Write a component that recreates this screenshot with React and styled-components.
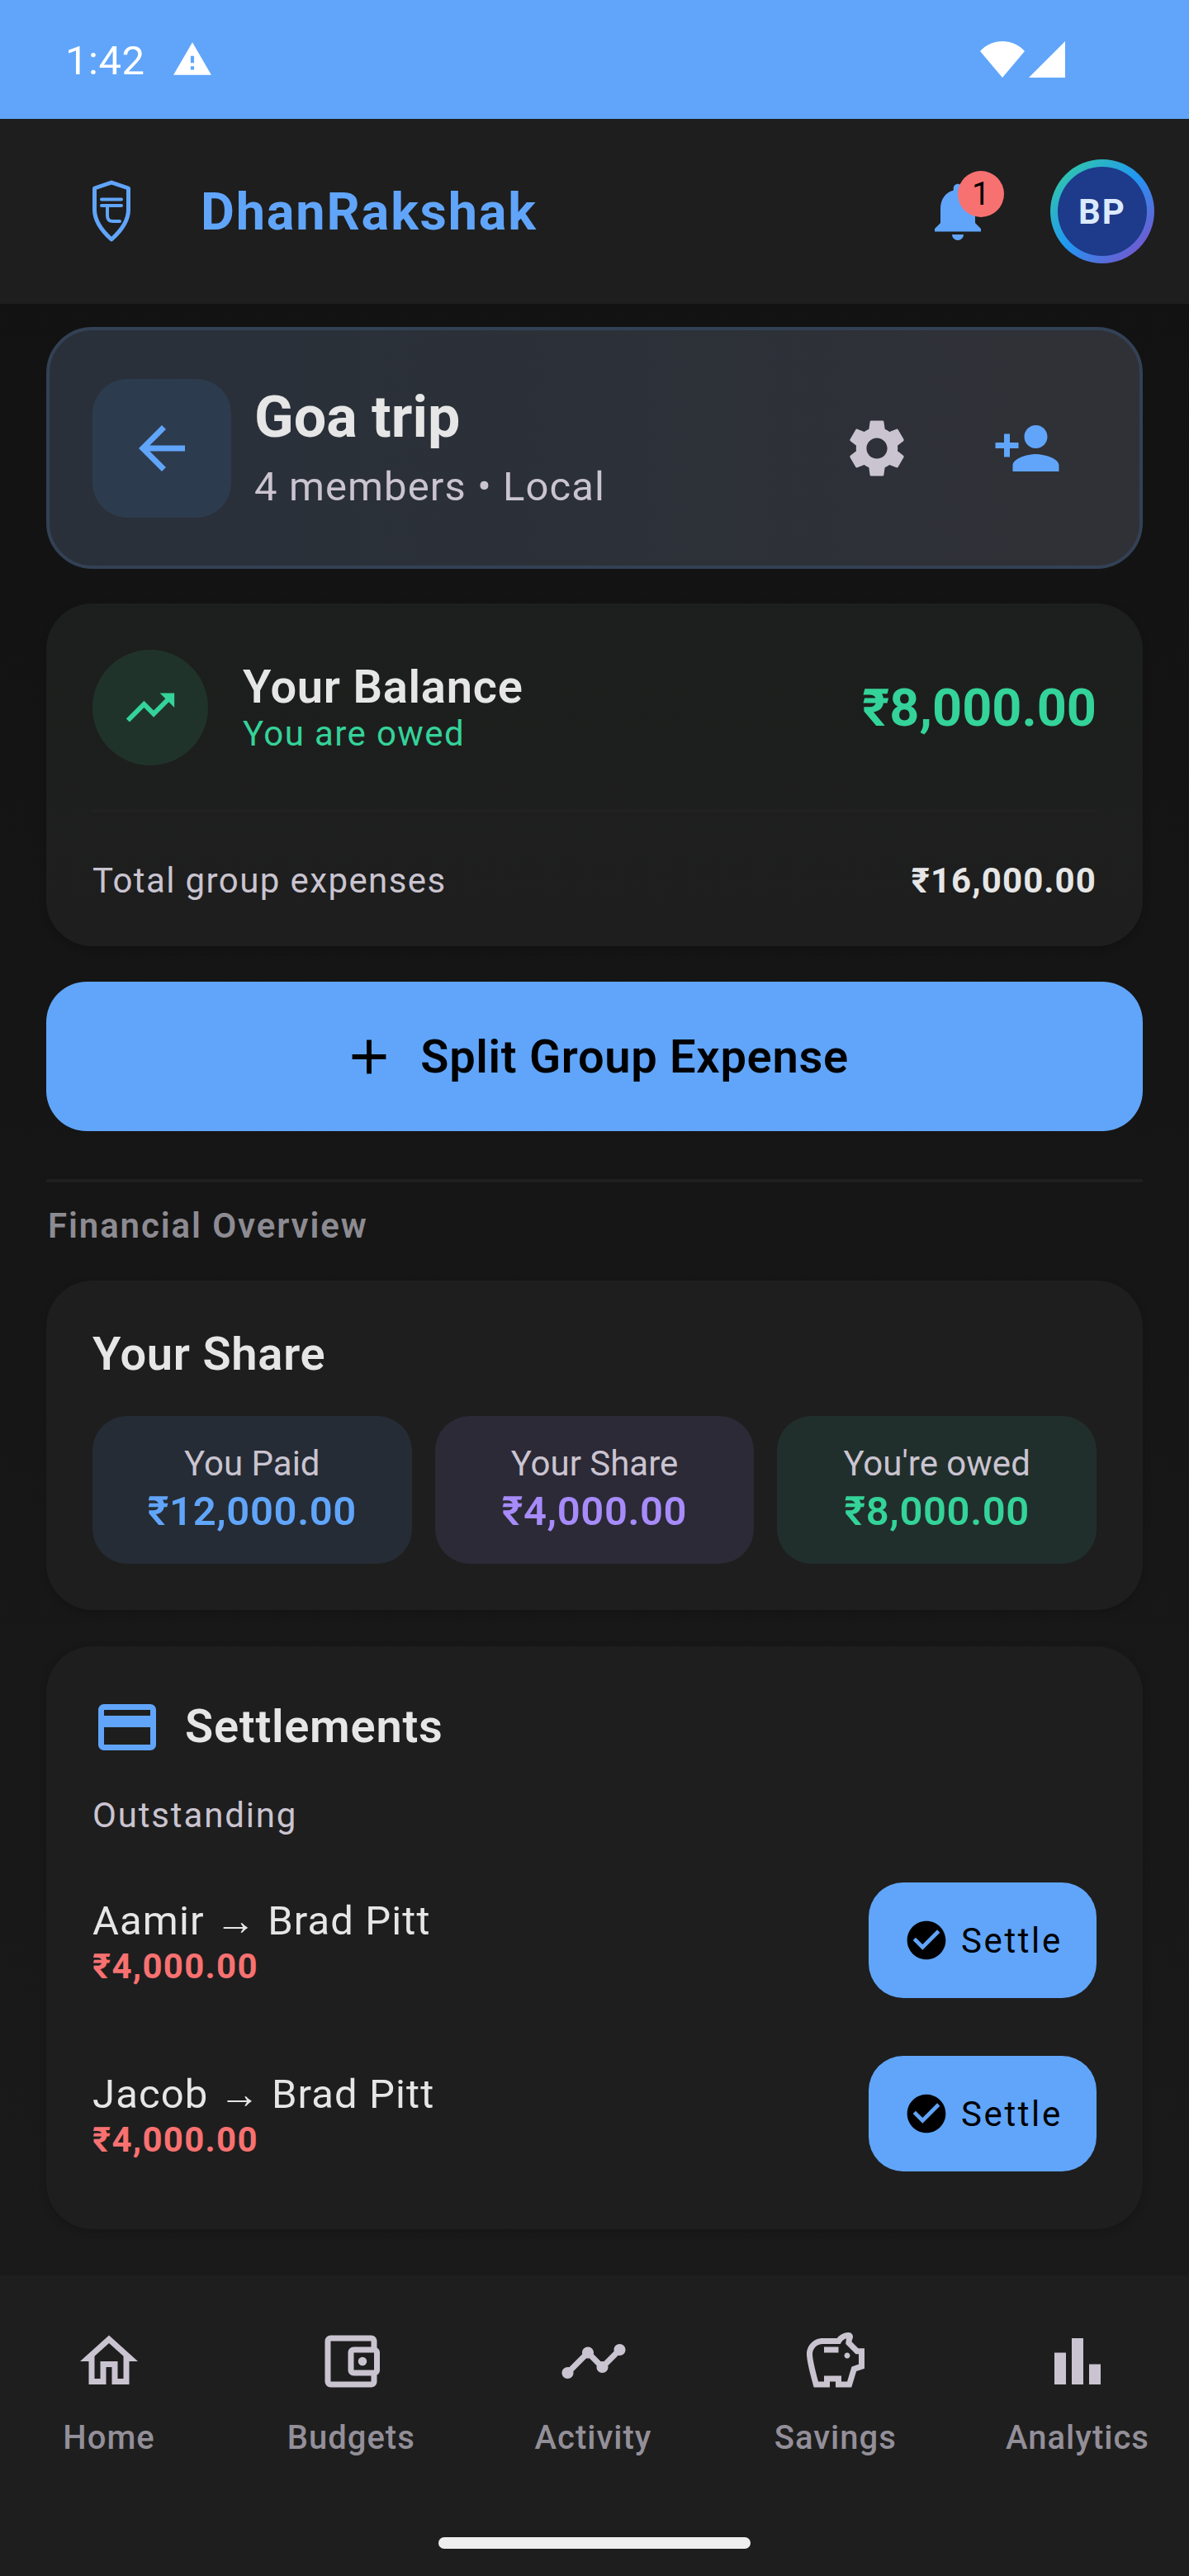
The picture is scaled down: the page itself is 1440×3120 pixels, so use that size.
import React from 'react';
import styled, { createGlobalStyle } from 'styled-components';
import {
  MdAdd,
  MdArrowBack,
  MdBarChart,
  MdCheckCircle,
  MdCreditCard,
  MdNotifications,
  MdOutlineAccountBalanceWallet,
  MdOutlineHome,
  MdOutlineSavings,
  MdPersonAdd,
  MdSettings,
  MdTimeline,
  MdTrendingUp,
  MdWarning,
} from 'react-icons/md';

const blue = '#60a5fa';
const green = '#34d399';
const red = '#f87171';
const purple = '#a78bfa';
const muted = '#cac4d0';
const light = '#e6e6e6';

const GlobalStyle = createGlobalStyle`
  html, body {
    margin: 0;
    padding: 0;
    background: #121212;
  }
  body {
    font-family: Roboto, "Noto Sans", sans-serif;
  }
  * {
    box-sizing: border-box;
  }
`;

const Page = styled.div`
  width: 1440px;
  height: 3120px;
  display: flex;
  flex-direction: column;
  overflow: hidden;
  background: linear-gradient(180deg, #111111 0%, #1b1b1b 100%);
`;

const StatusBar = styled.div`
  height: 144px;
  flex: none;
  display: flex;
  align-items: center;
  background: ${blue};
  color: #fff;
  padding: 0 150px 0 79px;
`;

const Clock = styled.span`
  font-size: 49px;
  font-weight: 400;
  letter-spacing: 0.5px;
  margin-top: 2px;
`;

const WarningIcon = styled(MdWarning)`
  margin-left: 33px;
`;

const StatusIcons = styled.div`
  margin-left: auto;
  display: flex;
  align-items: flex-end;
  gap: 5px;
`;

const Header = styled.header`
  height: 224px;
  flex: none;
  display: flex;
  align-items: center;
  background: #1e1e1e;
  padding: 0 42px 0 112px;
`;

const Brand = styled.div`
  font-size: 63px;
  font-weight: 700;
  letter-spacing: 1.8px;
  color: ${blue};
  margin-left: 85px;
`;

const Bell = styled.div`
  position: relative;
  width: 84px;
  height: 84px;
  margin-left: auto;
  color: ${blue};
  font-size: 84px;
  line-height: 0;
`;

const Badge = styled.span`
  position: absolute;
  left: 42px;
  top: -7px;
  width: 56px;
  height: 56px;
  border-radius: 50%;
  background: ${red};
  color: #000;
  font-size: 39px;
  line-height: 56px;
  text-align: center;
`;

const Avatar = styled.div`
  width: 126px;
  height: 126px;
  margin-left: 70px;
  padding: 9px;
  border-radius: 50%;
  background: linear-gradient(135deg, #34d399 0%, #2196f3 50%, #8b45c4 100%);
`;

const AvatarInner = styled.div`
  width: 100%;
  height: 100%;
  border-radius: 50%;
  background: #1e3a8a;
  color: #dbeafe;
  display: flex;
  align-items: center;
  justify-content: center;
  font-size: 42px;
  font-weight: 700;
  letter-spacing: 2px;
`;

const Content = styled.main`
  flex: 1;
  padding: 28px 56px 0;
  display: flex;
  flex-direction: column;
`;

const GroupCard = styled.section`
  height: 293px;
  flex: none;
  display: flex;
  align-items: center;
  padding: 0 52px;
  border: 4px solid #334155;
  border-radius: 56px;
  background: linear-gradient(90deg, #29303a 0%, #2f3136 100%);
`;

const BackButton = styled.div`
  width: 168px;
  height: 168px;
  border-radius: 42px;
  background: #2d3b4e;
  color: ${blue};
  font-size: 84px;
  display: flex;
  align-items: center;
  justify-content: center;
`;

const GroupText = styled.div`
  margin-left: 28px;
  flex: 1;
`;

const GroupTitle = styled.div`
  font-size: 70px;
  line-height: 84px;
  font-weight: 700;
  color: ${light};
`;

const GroupMeta = styled.div`
  margin-top: 10px;
  font-size: 49px;
  line-height: 66px;
  letter-spacing: 1.1px;
  color: ${muted};
`;

const IconButton = styled.div`
  width: 168px;
  height: 168px;
  margin-left: 14px;
  font-size: 84px;
  color: ${(p) => p.$color};
  display: flex;
  align-items: center;
  justify-content: center;
`;

const Card = styled.section`
  flex: none;
  margin-top: ${(p) => p.$top}px;
  padding: 56px;
  border-radius: 56px;
  background: #1e1e1e;
  box-shadow: 0 3px 10px rgba(0, 0, 0, 0.18);
`;

const BalanceCard = styled(Card)`
  background: linear-gradient(180deg, #1c1f1d 0%, #1e1e1e 100%);
`;

const BalanceRow = styled.div`
  height: 140px;
  display: flex;
  align-items: center;
`;

const TrendCircle = styled.div`
  width: 140px;
  height: 140px;
  border-radius: 50%;
  background: #20332b;
  color: ${green};
  font-size: 70px;
  display: flex;
  align-items: center;
  justify-content: center;
`;

const BalanceText = styled.div`
  margin-left: 42px;
  flex: 1;
`;

const BalanceTitle = styled.div`
  font-size: 56px;
  line-height: 64px;
  font-weight: 600;
  letter-spacing: 0.75px;
  color: ${light};
`;

const BalanceSub = styled.div`
  font-size: 42px;
  line-height: 50px;
  letter-spacing: 1.4px;
  color: ${green};
`;

const BalanceAmount = styled.div`
  font-size: 63px;
  font-weight: 700;
  color: ${green};
`;

const Rule = styled.div`
  height: 4px;
  flex: none;
  background: ${(p) => p.$color};
  margin-top: ${(p) => p.$top}px;
`;

const TotalRow = styled.div`
  height: 48px;
  margin-top: 58px;
  display: flex;
  align-items: center;
  justify-content: space-between;
  font-size: 42px;
  color: ${muted};
`;

const TotalLabel = styled.span`
  letter-spacing: 1.4px;
`;

const TotalValue = styled.span`
  font-weight: 700;
  letter-spacing: 1.1px;
  color: ${light};
`;

const SplitButton = styled.div`
  flex: none;
  height: 181px;
  margin-top: 43px;
  border-radius: 49px;
  background: ${blue};
  color: #000;
  display: flex;
  align-items: center;
  justify-content: center;
  gap: 27px;
  font-size: 56px;
  font-weight: 600;
  letter-spacing: 0.7px;
`;

const SectionLabel = styled.div`
  margin-top: 28px;
  font-size: 42px;
  line-height: 49px;
  font-weight: 600;
  letter-spacing: 1.9px;
  color: #8d8b92;
  padding-left: 2px;
`;

const CardTitle = styled.div`
  font-size: 56px;
  line-height: 66px;
  font-weight: 600;
  letter-spacing: 0.75px;
  color: ${light};
`;

const SettlementTitle = styled(CardTitle)`
  margin-bottom: 3px;
`;

const TileRow = styled.div`
  margin-top: 42px;
  display: grid;
  grid-template-columns: repeat(3, 1fr);
  gap: 28px;
`;

const Tile = styled.div`
  height: 179px;
  padding-bottom: 4px;
  border-radius: 42px;
  background: ${(p) => p.$bg};
  display: flex;
  flex-direction: column;
  align-items: center;
  justify-content: center;
`;

const TileLabel = styled.div`
  font-size: 42px;
  line-height: 56px;
  color: ${muted};
`;

const TileValue = styled.div`
  font-size: 49px;
  line-height: 60px;
  font-weight: 600;
  letter-spacing: 0.6px;
  color: ${(p) => p.$color};
`;

const SettlementCard = styled(Card)`
  padding-bottom: 70px;
`;

const SettlementHead = styled.div`
  height: 84px;
  display: flex;
  align-items: center;
  gap: 28px;
  color: ${blue};
  font-size: 84px;
`;

const Outstanding = styled.div`
  margin-top: 37px;
  font-size: 42px;
  line-height: 56px;
  letter-spacing: 1.85px;
  color: ${muted};
`;

const SettlementList = styled.div`
  margin-top: 53px;
  display: flex;
  flex-direction: column;
  gap: 70px;
`;

const SettlementRow = styled.div`
  display: flex;
  align-items: center;
  justify-content: space-between;
`;

const SettlementText = styled.div`
  padding-top: 8px;
`;

const SettlementName = styled.div`
  font-size: 49px;
  line-height: 56px;
  letter-spacing: 1.1px;
  color: ${light};
`;

const SettlementAmount = styled.div`
  font-size: 42px;
  line-height: 54px;
  font-weight: 700;
  letter-spacing: 1.3px;
  color: ${red};
`;

const SettleButton = styled.div`
  width: 276px;
  height: 140px;
  border-radius: 42px;
  background: ${blue};
  color: #000;
  display: flex;
  align-items: center;
  padding-left: 42px;
  gap: 14px;
  font-size: 42px;
  letter-spacing: 2.6px;
`;

const BottomNav = styled.nav`
  height: 364px;
  flex: none;
  background: #1e1e1e;
  padding-top: 62px;
  display: flex;
  flex-direction: column;
  align-items: center;
`;

const NavRow = styled.div`
  width: 100%;
  display: flex;
  justify-content: space-between;
  padding: 0 35px 0 32px;
`;

const NavItem = styled.div`
  width: 200px;
  display: flex;
  flex-direction: column;
  align-items: center;
`;

const NavIcon = styled.div`
  height: 84px;
  font-size: 84px;
  line-height: 0;
  color: ${muted};
`;

const NavLabel = styled.div`
  margin-top: 26px;
  font-size: 40px;
  line-height: 50px;
  font-weight: 500;
  letter-spacing: 1px;
  color: #938f99;
`;

const HomeIndicator = styled.div`
  width: 378px;
  height: 14px;
  margin-top: 95px;
  border-radius: 7px;
  background: #eeeeee;
`;

const navItems = [
  { label: 'Home', Icon: MdOutlineHome },
  { label: 'Budgets', Icon: MdOutlineAccountBalanceWallet },
  { label: 'Activity', Icon: MdTimeline },
  { label: 'Savings', Icon: MdOutlineSavings },
  { label: 'Analytics', Icon: MdBarChart },
];

const settlements = ['Aamir', 'Jacob'];

function ShieldLogo() {
  return (
    <svg width="46" height="76" viewBox="0 0 46 76" fill="none" stroke={blue} strokeWidth="5">
      <path d="M23 3 L43.500 10 V36 C43.500 50 33 63 23 72 C13 63 2.500 50 2.500 36 V10 Z" strokeLinejoin="round" />
      <path d="M11 23.500 H35 M11 31 H35" strokeWidth="4" strokeLinecap="round" />
      <path d="M18 33 V43 C18 48 20 50 25 50 H33" strokeWidth="4" strokeLinecap="round" />
    </svg>
  );
}

function WifiIcon() {
  return (
    <svg width="54" height="44" viewBox="0 0 54 44" fill="#fff">
      <path d="M27 44 L0 12 C7 4 17 0 27 0 C37 0 47 4 54 12 Z" />
    </svg>
  );
}

function SignalIcon() {
  return (
    <svg width="44" height="44" viewBox="0 0 44 44" fill="#fff">
      <path d="M44 0 V44 H0 Z" />
    </svg>
  );
}

export default function App() {
  return (
    <Page>
      <GlobalStyle />
      <StatusBar>
        <Clock>1:42</Clock>
        <WarningIcon size={50} />
        <StatusIcons>
          <WifiIcon />
          <SignalIcon />
        </StatusIcons>
      </StatusBar>

      <Header>
        <ShieldLogo />
        <Brand>DhanRakshak</Brand>
        <Bell>
          <MdNotifications />
          <Badge>1</Badge>
        </Bell>
        <Avatar>
          <AvatarInner>BP</AvatarInner>
        </Avatar>
      </Header>

      <Content>
        <GroupCard>
          <BackButton>
            <MdArrowBack />
          </BackButton>
          <GroupText>
            <GroupTitle>Goa trip</GroupTitle>
            <GroupMeta>4 members • Local</GroupMeta>
          </GroupText>
          <IconButton $color={muted}>
            <MdSettings />
          </IconButton>
          <IconButton $color={blue}>
            <MdPersonAdd />
          </IconButton>
        </GroupCard>

        <BalanceCard $top={42}>
          <BalanceRow>
            <TrendCircle>
              <MdTrendingUp />
            </TrendCircle>
            <BalanceText>
              <BalanceTitle>Your Balance</BalanceTitle>
              <BalanceSub>You are owed</BalanceSub>
            </BalanceText>
            <BalanceAmount>₹8,000.00</BalanceAmount>
          </BalanceRow>
          <Rule $top={53} $color="#202120" />
          <TotalRow>
            <TotalLabel>Total group expenses</TotalLabel>
            <TotalValue>₹16,000.00</TotalValue>
          </TotalRow>
        </BalanceCard>

        <SplitButton>
          <MdAdd size={70} />
          Split Group Expense
        </SplitButton>

        <Rule $top={58} $color="#1f1f1f" />
        <SectionLabel>Financial Overview</SectionLabel>

        <Card $top={42}>
          <CardTitle>Your Share</CardTitle>
          <TileRow>
            <Tile $bg="#252c35">
              <TileLabel>You Paid</TileLabel>
              <TileValue $color={blue}>₹12,000.00</TileValue>
            </Tile>
            <Tile $bg="#2c2a36">
              <TileLabel>Your Share</TileLabel>
              <TileValue $color={purple}>₹4,000.00</TileValue>
            </Tile>
            <Tile $bg="#212f2c">
              <TileLabel>You're owed</TileLabel>
              <TileValue $color={green}>₹8,000.00</TileValue>
            </Tile>
          </TileRow>
        </Card>

        <SettlementCard $top={44}>
          <SettlementHead>
            <MdCreditCard />
            <SettlementTitle>Settlements</SettlementTitle>
          </SettlementHead>
          <Outstanding>Outstanding</Outstanding>
          <SettlementList>
            {settlements.map((name) => (
              <SettlementRow key={name}>
                <SettlementText>
                  <SettlementName>{name} → Brad Pitt</SettlementName>
                  <SettlementAmount>₹4,000.00</SettlementAmount>
                </SettlementText>
                <SettleButton>
                  <MdCheckCircle size={56} />
                  Settle
                </SettleButton>
              </SettlementRow>
            ))}
          </SettlementList>
        </SettlementCard>
      </Content>

      <BottomNav>
        <NavRow>
          {navItems.map(({ label, Icon }) => (
            <NavItem key={label}>
              <NavIcon>
                <Icon />
              </NavIcon>
              <NavLabel>{label}</NavLabel>
            </NavItem>
          ))}
        </NavRow>
        <HomeIndicator />
      </BottomNav>
    </Page>
  );
}
